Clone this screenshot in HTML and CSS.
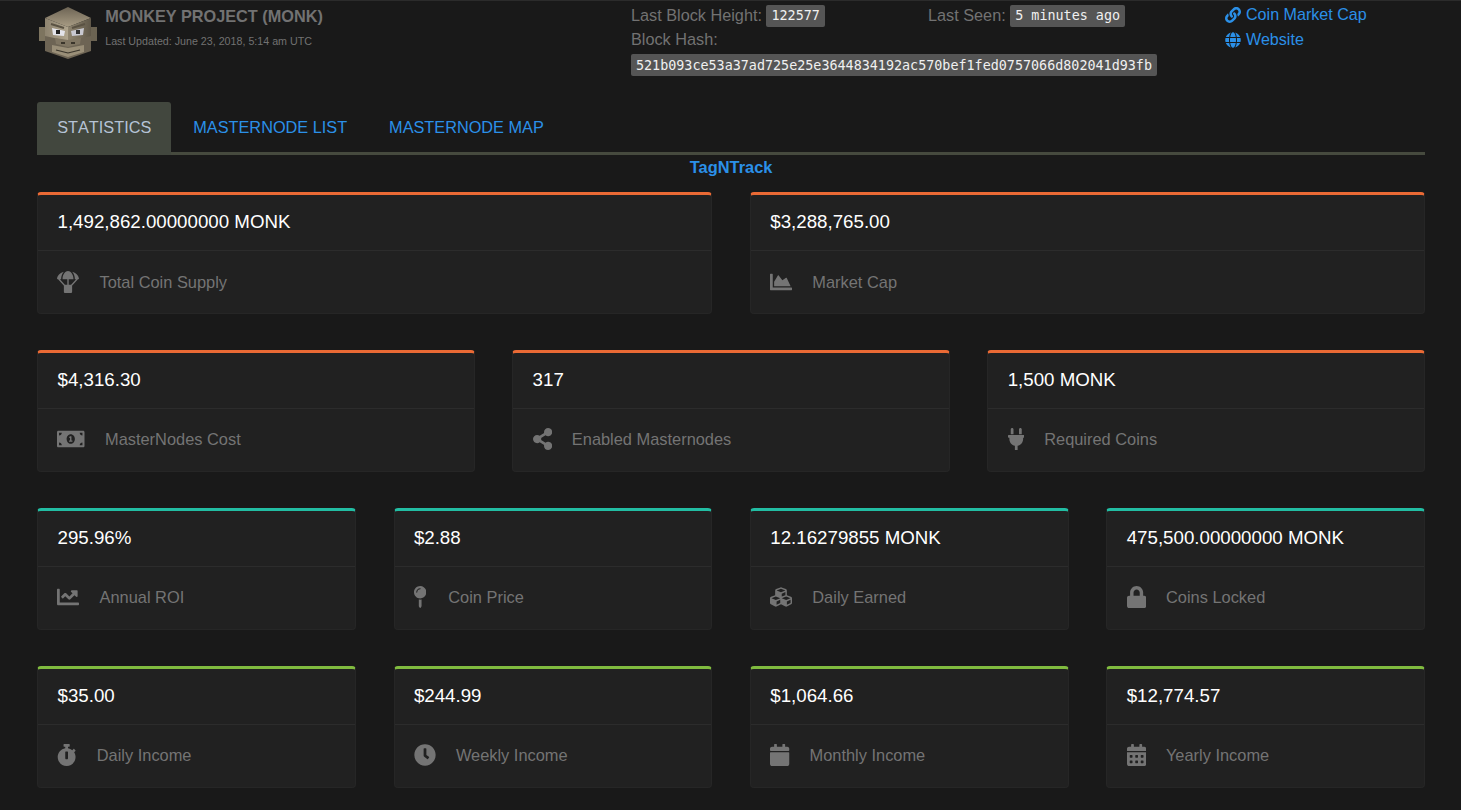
FILE: index.html
```html
<!DOCTYPE html>
<html lang="en">
<head>
<meta charset="utf-8">
<title>Monkey Project (MONK)</title>
<link rel="stylesheet" href="styles.css">
</head>
<body>
<svg class="defs" width="0" height="0" aria-hidden="true">
<symbol id="i-link" viewBox="0 0 512 512"><path d="M326.612 185.391c59.747 59.809 58.927 155.698.36 214.59-.11.12-.24.25-.36.37l-67.2 67.2c-59.27 59.27-155.699 59.262-214.96 0-59.27-59.26-59.27-155.7 0-214.96l37.106-37.106c9.84-9.84 26.786-3.3 27.294 10.606.648 17.722 3.826 35.527 9.69 52.721 1.986 5.822.567 12.262-3.783 16.612l-13.087 13.087c-28.026 28.026-28.905 73.66-1.155 101.96 28.024 28.579 74.086 28.749 102.325.51l67.2-67.19c28.191-28.191 28.073-73.757 0-101.83-3.701-3.694-7.429-6.564-10.341-8.569a16.037 16.037 0 0 1-6.947-12.606c-.396-10.567 3.348-21.456 11.698-29.806l21.054-21.055c5.521-5.521 14.182-6.199 20.584-1.731a152.482 152.482 0 0 1 20.522 17.197zM467.547 44.449c-59.261-59.262-155.69-59.27-214.96 0l-67.2 67.2c-.12.12-.25.25-.36.37-58.566 58.892-59.387 154.781.36 214.59a152.454 152.454 0 0 0 20.521 17.196c6.402 4.468 15.064 3.789 20.584-1.731l21.054-21.055c8.35-8.35 12.094-19.239 11.698-29.806a16.037 16.037 0 0 0-6.947-12.606c-2.912-2.005-6.64-4.875-10.341-8.569-28.073-28.073-28.191-73.639 0-101.83l67.2-67.19c28.239-28.239 74.3-28.069 102.325.51 27.75 28.3 26.872 73.934-1.155 101.96l-13.087 13.087c-4.35 4.35-5.769 10.79-3.783 16.612 5.864 17.194 9.042 34.999 9.69 52.721.509 13.906 17.454 20.446 27.294 10.606l37.106-37.106c59.271-59.259 59.271-155.699.001-214.959z"/></symbol>
<symbol id="i-globe" viewBox="0 0 496 512"><path d="M336.5 160C322 70.7 287.8 8 248 8s-74 62.7-88.5 152h177zM152 256c0 22.2 1.2 43.5 3.3 64h185.3c2.1-20.5 3.3-41.8 3.3-64s-1.2-43.5-3.3-64H155.3c-2.1 20.5-3.3 41.8-3.3 64zm324.7-96c-28.6-67.9-86.5-120.4-158-141.6 24.4 33.8 41.2 84.7 50 141.6h108zM177.2 18.4C105.8 39.6 47.8 92.1 19.3 160h108c8.7-56.9 25.5-107.8 49.9-141.6zM487.4 192H372.7c2.1 21 3.3 42.5 3.3 64s-1.2 43-3.3 64h114.6c5.5-20.5 8.6-41.8 8.6-64s-3.1-43.5-8.5-64zM120 256c0-21.5 1.2-43 3.3-64H8.6C3.2 212.5 0 233.8 0 256s3.2 43.5 8.6 64h114.6c-2-21-3.2-42.5-3.2-64zm39.5 96c14.5 89.3 48.7 152 88.5 152s74-62.7 88.5-152h-177zm159.3 141.6c71.4-21.2 129.4-73.7 158-141.6h-108c-8.8 56.9-25.6 107.8-50 141.6zM19.3 352c28.6 67.9 86.5 120.4 158 141.6-24.4-33.8-41.2-84.7-50-141.6h-108z"/></symbol>
</svg>

<header class="top">
  <div class="brand">
    <svg class="logo" viewBox="0 0 60 54" aria-hidden="true">
      <defs>
        <linearGradient id="lg-top" x1="0" y1="0" x2="0" y2="1"><stop offset="0" stop-color="#6d6454"/><stop offset="1" stop-color="#a89c84"/></linearGradient>
        <linearGradient id="lg-l" x1="0" y1="0" x2="1" y2="0"><stop offset="0" stop-color="#8d836f"/><stop offset="1" stop-color="#b0a58e"/></linearGradient>
        <linearGradient id="lg-r" x1="0" y1="0" x2="1" y2="0"><stop offset="0" stop-color="#8f8570"/><stop offset="1" stop-color="#5f5748"/></linearGradient>
      </defs>
      <rect x="1" y="20" width="7" height="14" fill="#7d745f"/>
      <rect x="52" y="20" width="7" height="14" fill="#6b6352"/>
      <polygon points="30,0 53,11 30,20 7,11" fill="url(#lg-top)"/>
      <polygon points="7,11 30,20 30,36 7,32" fill="url(#lg-l)"/>
      <polygon points="53,11 30,20 30,36 53,32" fill="url(#lg-r)"/>
      <polygon points="7,29 30,34 53,29 53,44 30,52 7,44" fill="#6d6454"/>
      <polygon points="14,38 30,41 46,38 46,45 30,50 14,45" fill="#9a8f78"/>
      <polygon points="17,31 30,33 43,31 42,37 30,40 18,37" fill="#7f7562"/>
      <rect x="23" y="35" width="4" height="2" fill="#3a352b"/>
      <rect x="33" y="35" width="4" height="2" fill="#3a352b"/>
      <path d="M18 43l12 3 12-3" fill="none" stroke="#3a352b" stroke-width="1.2"/>
      <polygon points="14,21 27,24 26,29 15,28" fill="#e4e4ea"/>
      <polygon points="46,21 33,24 34,29 45,28" fill="#c8c8d0"/>
      <rect x="18" y="23" width="4" height="4" fill="#222"/>
      <rect x="38" y="23" width="4" height="4" fill="#333"/>
      <path d="M13 17l13 4M47 17l-13 4" stroke="#5a5243" stroke-width="2"/>
    </svg>
    <div class="brand-text">
      <h1 class="title">MONKEY PROJECT (MONK)</h1>
      <p class="updated">Last Updated: June 23, 2018, 5:14 am UTC</p>
    </div>
  </div>
  <div class="chain">
    <div class="chain-item">Last Block Height: <code class="tag">122577</code></div>
    <div class="chain-item">Last Seen: <code class="tag">5 minutes ago</code></div>
    <div class="chain-item chain-wide">Block Hash:</div>
    <div class="chain-item chain-wide hash-line"><code class="tag">521b093ce53a37ad725e25e3644834192ac570bef1fed0757066d802041d93fb</code></div>
  </div>
  <div class="links">
    <a class="link" href="#"><svg class="link-icon link-icon-a"><use href="#i-link"/></svg>Coin Market Cap</a>
    <a class="link" href="#"><svg class="link-icon link-icon-b"><use href="#i-globe"/></svg>Website</a>
  </div>
</header>

<nav class="tabs">
  <a class="tab tab-active" href="#">STATISTICS</a>
  <a class="tab" href="#">MASTERNODE LIST</a>
  <a class="tab" href="#">MASTERNODE MAP</a>
</nav>

<div class="sponsor"><a href="#">TagNTrack</a></div>

<main class="stats">
  <section class="row row-2">
    <article class="card card-orange">
      <div class="value">1,492,862.00000000 MONK</div>
      <div class="label"><svg class="icon" viewBox="0 0 512 512"><path d="M511.9 175c-9.1-75.6-78.4-132.4-158.3-158.7C390 55.7 416 116.9 416 192h28.1L327.5 321.5c-2.5-.6-4.8-1.5-7.5-1.5h-48V192h112C384 76.8 315.1 0 256 0S128 76.8 128 192h112v128h-48c-2.7 0-5 .9-7.5 1.5L67.9 192H96c0-75.1 26-136.3 62.4-175.7C78.5 42.7 9.2 99.5.1 175c-1.1 9.1 6.8 17 16 17h8.7l136.7 151.9c-.7 2.6-1.6 5.2-1.6 8.1v128c0 17.7 14.3 32 32 32h128c17.7 0 32-14.3 32-32V352c0-2.9-.9-5.4-1.6-8.1L487.1 192h8.7c9.3 0 17.2-7.9 16.1-17z"/></svg>Total Coin Supply</div>
    </article>
    <article class="card card-orange">
      <div class="value">$3,288,765.00</div>
      <div class="label"><svg class="icon" viewBox="0 0 512 512"><path d="M500 384c6.6 0 12 5.4 12 12v40c0 6.6-5.4 12-12 12H12c-6.6 0-12-5.4-12-12V76c0-6.6 5.4-12 12-12h40c6.6 0 12 5.4 12 12v308h436zM372.7 159.5L288 216l-85.3-113.7c-5.1-6.8-15.5-6.3-19.9 1L96 248v104h384l-89.9-187.8c-3.2-6.5-11.4-8.7-17.4-4.7z"/></svg>Market Cap</div>
    </article>
  </section>

  <section class="row row-3">
    <article class="card card-orange">
      <div class="value">$4,316.30</div>
      <div class="label"><svg class="icon" viewBox="0 0 640 512"><path fill-rule="evenodd" d="M352 288h-16v-88c0-4.42-3.58-8-8-8h-13.58c-4.74 0-9.37 1.4-13.31 4.03l-15.33 10.22a7.978 7.978 0 0 0-2.22 11.09l8.88 13.31a7.978 7.978 0 0 0 11.09 2.22l.47-.31V288h-16c-4.42 0-8 3.58-8 8v16c0 4.42 3.58 8 8 8h64c4.42 0 8-3.58 8-8v-16c0-4.42-3.58-8-8-8zM608 64H32C14.33 64 0 78.33 0 96v320c0 17.67 14.33 32 32 32h576c17.67 0 32-14.33 32-32V96c0-17.67-14.33-32-32-32zM48 400v-64c35.35 0 64 28.65 64 64H48zm0-224v-64h64c0 35.35-28.65 64-64 64zm272 192c-53 0-96-50.15-96-112 0-61.86 43-112 96-112s96 50.14 96 112c0 61.87-43.02 112-96 112zm272 32h-64c0-35.35 28.65-64 64-64v64zm0-224c-35.35 0-64-28.65-64-64h64v64z"/></svg>MasterNodes Cost</div>
    </article>
    <article class="card card-orange">
      <div class="value">317</div>
      <div class="label"><svg class="icon" viewBox="0 0 448 512"><path d="M352 320c-22.608 0-43.387 7.819-59.79 20.895l-102.486-64.054a96.551 96.551 0 0 0 0-41.683l102.486-64.054C308.613 184.181 329.392 192 352 192c53.019 0 96-42.981 96-96S405.019 0 352 0s-96 42.981-96 96c0 7.158.79 14.13 2.276 20.841L155.79 180.895C139.387 167.819 118.608 160 96 160c-53.019 0-96 42.981-96 96s42.981 96 96 96c22.608 0 43.387-7.819 59.79-20.895l102.486 64.054A96.301 96.301 0 0 0 256 416c0 53.019 42.981 96 96 96s96-42.981 96-96-42.981-96-96-96z"/></svg>Enabled Masternodes</div>
    </article>
    <article class="card card-orange">
      <div class="value">1,500 MONK</div>
      <div class="label"><svg class="icon" viewBox="0 0 384 512"><path d="M256 144V32c0-17.673 14.327-32 32-32s32 14.327 32 32v112h-64zm112 16H16c-8.837 0-16 7.163-16 16v32c0 8.837 7.163 16 16 16h16v32c0 77.406 54.969 141.971 128 156.796V512h64v-99.204c73.031-14.825 128-79.39 128-156.796v-32h16c8.837 0 16-7.163 16-16v-32c0-8.837-7.163-16-16-16zm-240-16V32c0-17.673-14.327-32-32-32S64 14.327 64 32v112h64z"/></svg>Required Coins</div>
    </article>
  </section>

  <section class="row row-4">
    <article class="card card-teal">
      <div class="value">295.96%</div>
      <div class="label"><svg class="icon" viewBox="0 0 512 512"><path d="M496 384H64V80c0-8.84-7.16-16-16-16H16C7.16 64 0 71.16 0 80v336c0 17.67 14.33 32 32 32h464c8.84 0 16-7.16 16-16v-32c0-8.84-7.16-16-16-16zM464 96H345.94c-21.38 0-32.09 25.85-16.97 40.97l32.4 32.4L288 242.75l-73.37-73.37c-12.5-12.5-32.76-12.5-45.25 0l-68.69 68.69c-6.25 6.25-6.25 16.38 0 22.63l22.62 22.62c6.25 6.25 16.38 6.25 22.63 0L192 237.25l73.37 73.37c12.5 12.5 32.76 12.5 45.25 0l96-96 32.4 32.4c15.12 15.12 40.97 4.41 40.97-16.97V112c.01-8.84-7.15-16-15.99-16z"/></svg>Annual ROI</div>
    </article>
    <article class="card card-teal">
      <div class="value">$2.88</div>
      <div class="label"><svg class="icon icon-pin" viewBox="0 0 288 512"><path d="M112 316.94v156.69l22.02 33.02c4.75 7.12 15.22 7.12 19.97 0L176 473.63V316.94c-10.39 1.92-21.06 3.06-32 3.06s-21.61-1.14-32-3.06zM144 0C64.47 0 0 64.47 0 144s64.47 144 144 144 144-64.47 144-144S223.53 0 144 0zm0 76c-37.5 0-68 30.5-68 68 0 6.62-5.38 12-12 12s-12-5.38-12-12c0-50.73 41.28-92 92-92 6.62 0 12 5.38 12 12s-5.38 12-12 12z"/></svg>Coin Price</div>
    </article>
    <article class="card card-teal">
      <div class="value">12.16279855 MONK</div>
      <div class="label"><svg class="icon" viewBox="0 0 512 512"><path d="M488.6 250.2L392 214V105.5c0-15-9.3-28.4-23.4-33.7l-100-37.5c-8.1-3.1-17.1-3.1-25.3 0l-100 37.5c-14.1 5.3-23.4 18.7-23.4 33.7V214l-96.6 36.2C9.3 255.5 0 268.9 0 283.9V394c0 13.6 7.7 26.1 19.9 32.2l100 50c10.1 5.1 22.1 5.1 32.2 0l103.9-52 103.9 52c10.1 5.1 22.1 5.1 32.2 0l100-50c12.2-6.1 19.9-18.6 19.9-32.2V283.9c0-15-9.3-28.4-23.4-33.7zM358 214.8l-85 31.9v-68.2l85-37v73.3zM154 104.1l102-38.2 102 38.2v.6l-102 41.4-102-41.4v-.6zm84 291.1l-85 42.5v-79.1l85-38.8v75.4zm0-112l-102 41.4-102-41.4v-.6l102-38.2 102 38.2v.6zm240 112l-85 42.5v-79.1l85-38.8v75.4zm0-112l-102 41.4-102-41.4v-.6l102-38.2 102 38.2v.6z"/></svg>Daily Earned</div>
    </article>
    <article class="card card-teal">
      <div class="value">475,500.00000000 MONK</div>
      <div class="label"><svg class="icon" viewBox="0 0 448 512"><path d="M400 224h-24v-72C376 68.2 307.8 0 224 0S72 68.2 72 152v72H48c-26.5 0-48 21.5-48 48v192c0 26.5 21.5 48 48 48h352c26.5 0 48-21.5 48-48V272c0-26.5-21.5-48-48-48zm-104 0H152v-72c0-39.7 32.3-72 72-72s72 32.3 72 72v72z"/></svg>Coins Locked</div>
    </article>
  </section>

  <section class="row row-4">
    <article class="card card-green">
      <div class="value">$35.00</div>
      <div class="label"><svg class="icon" viewBox="0 0 448 512"><path d="M432 304c0 114.9-93.1 208-208 208S16 418.9 16 304c0-104 76.3-190.2 176-205.5V64h-28c-6.6 0-12-5.4-12-12V12c0-6.6 5.4-12 12-12h120c6.6 0 12 5.4 12 12v40c0 6.6-5.4 12-12 12h-28v34.5c37.5 5.8 71.7 21.6 99.7 44.6l27.5-27.5c4.7-4.7 12.3-4.7 17 0l28.3 28.3c4.7 4.7 4.7 12.3 0 17l-29.4 29.4-.6.6C419.7 223.3 432 262.2 432 304zm-176 36V188.5c0-6.6-5.4-12-12-12h-40c-6.6 0-12 5.4-12 12V340c0 6.6 5.4 12 12 12h40c6.6 0 12-5.4 12-12z"/></svg>Daily Income</div>
    </article>
    <article class="card card-green">
      <div class="value">$244.99</div>
      <div class="label"><svg class="icon" viewBox="0 0 512 512"><path d="M256,8C119,8,8,119,8,256S119,504,256,504,504,393,504,256,393,8,256,8Zm92.49,313h0l-20,25a16,16,0,0,1-22.49,2.5h0l-67-49.72a40,40,0,0,1-15-31.23V112a16,16,0,0,1,16-16h32a16,16,0,0,1,16,16V256l58,42.5A16,16,0,0,1,348.49,321Z"/></svg>Weekly Income</div>
    </article>
    <article class="card card-green">
      <div class="value">$1,064.66</div>
      <div class="label"><svg class="icon" viewBox="0 0 448 512"><path d="M12 192h424c6.6 0 12 5.4 12 12v260c0 26.5-21.5 48-48 48H48c-26.5 0-48-21.5-48-48V204c0-6.6 5.4-12 12-12zm436-44v-36c0-26.5-21.5-48-48-48h-48V12c0-6.6-5.4-12-12-12h-40c-6.6 0-12 5.4-12 12v52H160V12c0-6.6-5.4-12-12-12h-40c-6.6 0-12 5.4-12 12v52H48C21.5 64 0 85.5 0 112v36c0 6.6 5.4 12 12 12h424c6.6 0 12-5.4 12-12z"/></svg>Monthly Income</div>
    </article>
    <article class="card card-green">
      <div class="value">$12,774.57</div>
      <div class="label"><svg class="icon" viewBox="0 0 448 512"><path fill-rule="evenodd" d="M0 464c0 26.5 21.5 48 48 48h352c26.5 0 48-21.5 48-48V192H0v272zm320-196c0-6.6 5.4-12 12-12h40c6.6 0 12 5.4 12 12v40c0 6.6-5.4 12-12 12h-40c-6.6 0-12-5.4-12-12v-40zm0 128c0-6.6 5.4-12 12-12h40c6.6 0 12 5.4 12 12v40c0 6.6-5.4 12-12 12h-40c-6.6 0-12-5.4-12-12v-40zM192 268c0-6.6 5.4-12 12-12h40c6.6 0 12 5.4 12 12v40c0 6.6-5.4 12-12 12h-40c-6.6 0-12-5.4-12-12v-40zm0 128c0-6.6 5.4-12 12-12h40c6.6 0 12 5.4 12 12v40c0 6.6-5.4 12-12 12h-40c-6.6 0-12-5.4-12-12v-40zM64 268c0-6.6 5.4-12 12-12h40c6.6 0 12 5.4 12 12v40c0 6.6-5.4 12-12 12H76c-6.6 0-12-5.4-12-12v-40zm0 128c0-6.6 5.4-12 12-12h40c6.6 0 12 5.4 12 12v40c0 6.6-5.4 12-12 12H76c-6.6 0-12-5.4-12-12v-40zM400 64h-48V16c0-8.8-7.2-16-16-16h-32c-8.8 0-16 7.2-16 16v48H160V16c0-8.8-7.2-16-16-16h-32c-8.8 0-16 7.2-16 16v48H48C21.5 64 0 85.5 0 112v48h448v-48c0-26.5-21.5-48-48-48z"/></svg>Yearly Income</div>
    </article>
  </section>
</main>
</body>
</html>
```

FILE: styles.css
```css
* { box-sizing: border-box; }
html, body { margin: 0; padding: 0; }
body {
  background: #191919;
  border-top: 1px solid #2b2b2b;
  color: #727272;
  font-family: "Liberation Sans", Arial, sans-serif;
  font-size: 16.25px;
  padding: 0 36px 22px 37.2px;
}
a { color: #2b90e8; text-decoration: none; }
.defs { display: block; height: 0; }

.top { display: flex; height: 101px; }
.brand { display: flex; width: 593.8px; flex: none; }
.logo { width: 60px; height: 54px; margin: 6px 7px 0 1px; flex: none; }
.title { margin: 5px 0 0; font-size: 16.3px; line-height: 20px; font-weight: 700; color: #727272; }
.updated { margin: 8px 0 0; font-size: 10.7px; line-height: 14px; color: #727272; }

.chain {
  display: grid;
  grid-template-columns: 297px 297px;
  grid-auto-rows: min-content;
  flex: none;
  padding-top: 2px;
}
.chain-item { line-height: 24px; height: 24px; white-space: nowrap; }
.chain-wide { grid-column: 1 / 3; }
.hash-line { margin-top: 1px; }
.hash-line .tag { line-height: 24px; }
.tag {
  display: inline-block;
  background: #555;
  color: #f0f0f0;
  font-family: "DejaVu Sans Mono", "Liberation Mono", monospace;
  font-size: 13.4px;
  line-height: 22px;
  height: 22px;
  padding: 0 5px;
  margin-bottom: 2px;
  border-radius: 2px;
  vertical-align: middle;
}

.links { display: flex; flex-direction: column; padding-top: 1px; }
.link { display: flex; align-items: center; height: 25px; line-height: 25px; font-size: 16.1px; }
.link-icon { width: 16px; height: 16px; margin-right: 5px; fill: currentColor; }

.tabs { display: flex; gap: 2px; height: 53px; border-bottom: 3px solid #464a3e; }
.tab {
  padding: 0 20px;
  height: 53px;
  line-height: 50px;
  font-size: 16.3px;
  font-kerning: none;
  border-radius: 3px 3px 0 0;
}
.tab-active { background: #42473e; color: #b5c3d6; }

.sponsor { text-align: center; font-weight: 700; font-size: 16.4px; line-height: 24px; height: 37px; }

.stats { display: flex; flex-direction: column; gap: 36px; }
.row { display: grid; column-gap: 37.8px; }
.row-2 { grid-template-columns: repeat(2, 1fr); }
.row-3 { grid-template-columns: repeat(3, 1fr); column-gap: 37.5px; }
.row-4 { grid-template-columns: repeat(4, 1fr); }

.card {
  height: 122px;
  background: #212121;
  border: 1px solid #262626;
  border-top: 3px solid;
  border-radius: 4px;
}
.card-orange { border-top-color: #ea6a35; }
.card-teal { border-top-color: #22bda3; }
.card-green { border-top-color: #80bb3f; }

.value {
  height: 56px;
  line-height: 53px;
  padding-left: 19.3px;
  font-size: 18.72px;
  color: #fff;
  border-bottom: 1px solid #2c2c2c;
}
.row-2 .value { line-height: 54px; }
.label {
  display: flex;
  align-items: center;
  height: 62px;
  padding-left: 19.3px;
  padding-bottom: 2px;
  color: #747474;
  font-size: 16.4px;
}
.row-2 .label { padding-bottom: 0; }
.icon { height: 22px; width: auto; margin-right: 20px; fill: #747474; flex: none; }
.icon-pin { margin-right: 22px; }
```
